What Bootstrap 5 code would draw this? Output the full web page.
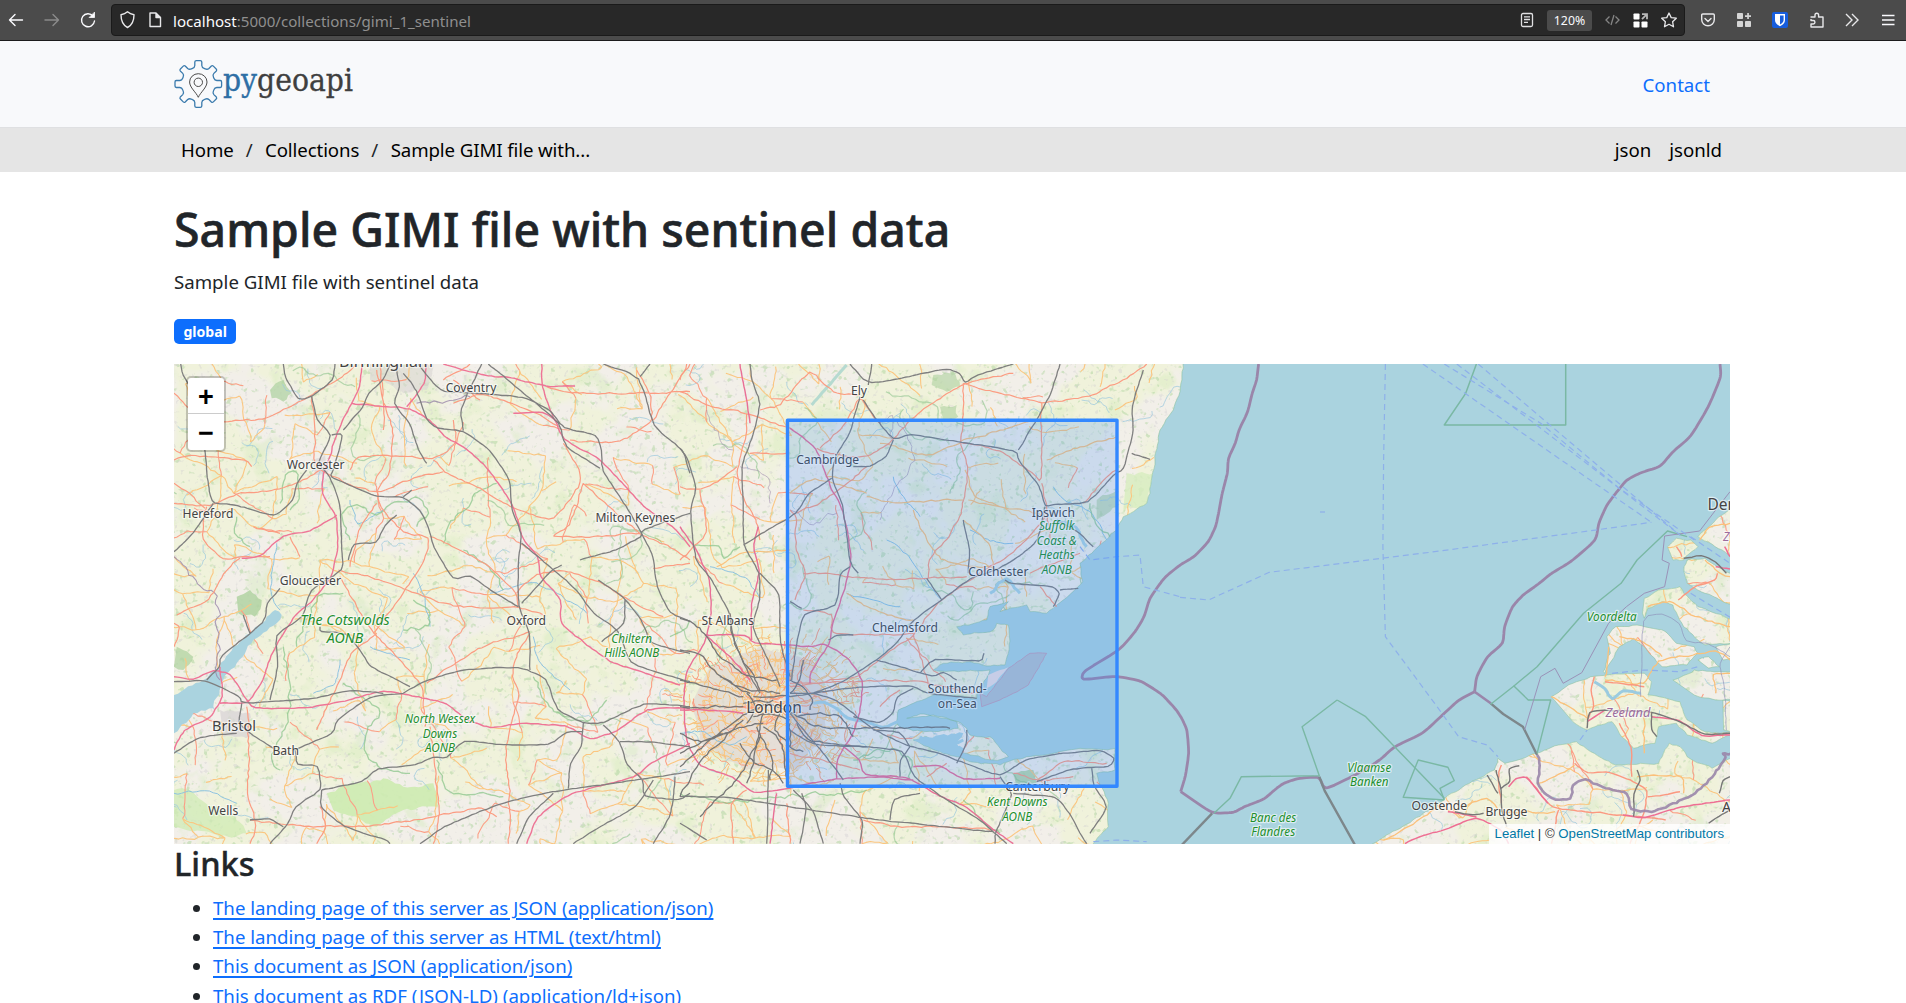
<!DOCTYPE html>
<html lang="en">
<head>
<meta charset="utf-8">
<title>Sample GIMI file with sentinel data</title>
<link href="https://cdn.jsdelivr.net/npm/bootstrap@5.3.0/dist/css/bootstrap.min.css" rel="stylesheet">
<style>
html{font-size:19.2px}
body{font-family:"Noto Sans","Open Sans",sans-serif;font-size:18.65px;line-height:29px;overflow:hidden;height:1003px;color:#212529;background:#fff}
.chrome{height:41px;background:#4b4b4b;border-bottom:1px solid #1c1c1c;padding:0 0 0 7px}
.chrome svg{display:block;flex:none}
.urlbar{height:32px;background:#282828;border:1px solid #1a1a1a;border-radius:4px;width:1574px;flex:none;margin-left:14px;padding:0 7px 0 8px}
.url-txt{font-size:15.1px;color:#8f8f8f;margin-left:9px;line-height:20px;padding-top:1px}
.url-txt b{font-weight:400;color:#fbfbfe}
.urltools{gap:13px}
.exttools{gap:21.600px;margin-left:16px}
.zoomlvl{width:45px;height:21px;border-radius:3px;background:#4b4b4b;color:#fbfbfe;font-size:12.3px;line-height:21px;text-align:center}
.wrapx{width:1556px;margin-left:174px}
.site-head{height:87px;background:#f8f9fb;border-bottom:1px solid #dfe0e2}
.contact-link{margin-right:20px}
.site-sub{height:44px;background:#e5e5e5}
.site-sub a{color:#000;text-decoration:none}
.crumbs{margin-left:7px;margin-top:-1px;letter-spacing:-.1px}
.crumbs span{color:#212529;margin:0 12.500px 0 12px}
.formats{gap:18px;margin-right:8px;margin-top:-1px}
.h-title{font-size:46.4px;line-height:58px;font-weight:500;margin:28px 0 9px;white-space:nowrap;-webkit-text-stroke:.6px #212529;letter-spacing:.04px}
.gbadge{font-size:14.1px;line-height:15px;padding:5px 9.400px;border-radius:5px;height:25px;display:block;width:62px;text-align:center;margin-top:23px;margin-bottom:20px;white-space:nowrap}
.mapbox{height:480px;position:relative;background:#aad3df;overflow:hidden;width:1556px}
.zctl{left:12px;top:12px;border:2px solid rgba(0,0,0,.2);border-radius:5px;background:#fff;background-clip:padding-box;width:40px;height:76px}
.zctl span{height:36px;width:36px;font:bold 27px/38px "Liberation Sans",sans-serif;color:#000;text-align:center;display:block}
.zctl span:first-child{border-bottom:1px solid #ccc}
.attrib{right:0;bottom:0;background:rgba(255,255,255,.8);font:13.2px/20px "Liberation Sans",Arial,sans-serif;padding:0 6px;color:#333;white-space:nowrap}
.attrib a{color:#0078a8;text-decoration:none}
.h-links{font-size:32.500px;line-height:38px;font-weight:500;margin:1px 0 10px;-webkit-text-stroke:.4px #212529}
.linklist{padding-left:39px;margin:0}
.linklist li{height:29.200px}
.linklist a{text-decoration:underline;text-decoration-thickness:2px;text-underline-offset:3px;color:#0d6efd}
.mapbox text{font-family:"Noto Sans",sans-serif}
</style>
<script src="https://cdn.jsdelivr.net/npm/bootstrap@5.3.0/dist/js/bootstrap.bundle.min.js"></script>
</head>
<body>
<div class="chrome d-flex align-items-center">
  <svg width="90" height="24" viewBox="0 0 90 24" fill="none" stroke="#fbfbfe" stroke-width="1.4" stroke-linecap="round" stroke-linejoin="round"><path d="M15.500 12H2.500M8 6.500 2.500 12 8 17.500"/><path d="M38 12H51.500M46 6.500 51.500 12 46 17.500" stroke="#8b8b8b"/><path d="M86 8A6.500 6.500 0 1 0 87.500 13"/><path d="M87.500 4.500V9.500H82.500Z" fill="#fbfbfe" stroke-width=".8"/></svg>
  <div class="urlbar d-flex align-items-center">
    <svg width="44" height="22" viewBox="0 0 44 22" fill="none" stroke="#e8e8ea" stroke-width="1.400" stroke-linejoin="round"><path d="M7.500 2.800C9.500 4.500 11.500 5.300 14 5.800 14 11.500 12.500 16 7.500 18.500 2.500 16 1 11.500 1 5.800 3.500 5.300 5.500 4.500 7.500 2.800Z"/><path d="M30 4h6l4.500 4.500V17.500H30Z"/><path d="M36 4v4.500h4.500" fill="#e8e8ea"/></svg>
    <div class="url-txt"><b>localhost</b>:5000/collections/gimi_1_sentinel</div>
    <div class="urltools d-flex align-items-center ms-auto">
      <svg width="14" height="16" viewBox="0 0 14 16" fill="none" stroke="#e0e0e2" stroke-width="1.300"><rect x="1.500" y="1.500" width="11" height="13" rx="1.500"/><path d="M4 4.800h6M4 7.500h6M4 10.300h4"/></svg>
      <div class="zoomlvl">120%</div>
      <svg width="15" height="12" viewBox="0 0 15 12" fill="none" stroke="#858585" stroke-width="1.300"><path d="M4.500 2.500 1 6l3.500 3.500M10.500 2.500 14 6l-3.500 3.500M9 1 6 11"/></svg>
      <svg width="15" height="15" viewBox="0 0 15 15" fill="#fff"><rect x=".5" y=".5" width="6" height="6" rx=".8"/><rect x=".5" y="8.500" width="6" height="6" rx=".8"/><rect x="8.500" y="8.500" width="6" height="6" rx=".8"/><path d="M9 1.200h5v5M14 1.200 9 6.200" fill="none" stroke="#b8b8b8" stroke-width="1.800"/></svg>
      <svg width="16" height="16" viewBox="0 0 16 16" fill="none" stroke="#e8e8ea" stroke-width="1.300" stroke-linejoin="round"><path d="M8 1 10.200 5.600 15.300 6.200 11.600 9.700 12.500 14.800 8 12.300 3.500 14.800 4.400 9.700.7 6.200 5.800 5.600Z"/></svg>
    </div>
  </div>
  <div class="exttools d-flex align-items-center">
    <svg width="14" height="14" viewBox="0 0 14 14" fill="none" stroke="#e8e8ea" stroke-width="1.400" stroke-linecap="round" stroke-linejoin="round"><path d="M1.800 1H12.200Q13.300 1 13.300 2V6.500A6.300 6.300 0 0 1 .7 6.500V2Q.7 1 1.800 1ZM4 5.500 7 8.400 10 5.500"/></svg>
    <svg width="14" height="14" viewBox="0 0 14 14" fill="#d5d5d5"><rect width="6" height="6" rx=".8"/><rect y="8" width="6" height="6" rx=".8"/><rect x="8" y="8" width="6" height="6" rx=".8"/><path d="M10.200 0h1.700v2.200h2.100v1.700h-2.100V6h-1.700V3.900H8V2.200h2.200Z"/></svg>
    <svg width="16" height="16" viewBox="0 0 16 16"><rect width="16" height="16" rx="2" fill="#175ddc"/><path d="M3 2h10v6c0 3.500-3 5.200-5 6.300C6 13.200 3 11.500 3 8Z" fill="#fff"/><path d="M8 3.500h3.600V8c0 2.200-2 3.600-3.600 4.500Z" fill="#175ddc"/></svg>
    <svg width="14" height="16" viewBox="0 0 14 16" fill="none" stroke="#e8e8ea" stroke-width="1.400" stroke-linejoin="round"><path d="M1 5.500V5H5V3a1.800 1.800 0 0 1 3.600 0V5H13V15H1V12H3.200a1.700 1.700 0 0 0 0-3.500H1V7"/></svg>
    <svg width="14" height="14" viewBox="0 0 14 14" fill="none" stroke="#e8e8ea" stroke-width="1.400"><path d="M1 1 7 7 1 13M7 1 13 7 7 13"/></svg>
    <svg width="14" height="12" viewBox="0 0 14 12" stroke="#fbfbfe" stroke-width="1.300"><path d="M1 1.500h12.500M1 6h12.500M1 10.500h12.500"/></svg>
  </div>
</div>
<header class="site-head d-flex align-items-center"><div class="wrapx d-flex align-items-center justify-content-between">
  <svg id="logo" width="182" height="52" viewBox="0 0 182 52"><g transform="translate(24.300 26)"><path id="gear" fill="none" stroke="#3b7bad" stroke-width="1.300" stroke-linejoin="round"/><path d="M0 13.300C-2 8.500-8.700 3.500-8.700-2A8.700 8.300 0 0 1 8.700-2C8.700 3.500 2 8.500 0 13.300Z" fill="none" stroke="#4a4a4a"/><circle cy="-1.700" r="4.200" fill="none" stroke="#4a4a4a"/></g><text x="49" y="32.700" font-family="DejaVu Serif" font-size="32" textLength="130" lengthAdjust="spacingAndGlyphs" fill="#3f3f3f" stroke="#3f3f3f" stroke-width=".35"><tspan fill="#2e6fa5" stroke="#2e6fa5">py</tspan>geoapi</text></svg>
  <a class="text-decoration-none contact-link" href="#">Contact</a>
</div></header>
<nav class="site-sub d-flex align-items-center"><div class="wrapx d-flex justify-content-between"><div class="crumbs d-flex"><a href="#">Home</a><span>/</span><a href="#">Collections</a><span>/</span><a href="#">Sample GIMI file with...</a></div><div class="formats d-flex"><a href="#">json</a><a href="#">jsonld</a></div></div></nav>
<main class="wrapx">
  <h1 class="h-title">Sample GIMI file with sentinel data</h1>
  <p class="mb-0">Sample GIMI file with sentinel data</p>
  <span class="gbadge text-bg-primary fw-bold">global</span>
  <div class="mapbox">
    <svg id="map" width="1556" height="480" viewBox="0 0 1556 480"></svg>
    <div class="zctl position-absolute"><span>+</span><span>−</span></div>
    <div class="attrib position-absolute"><a href="#">Leaflet</a> | © <a href="#">OpenStreetMap contributors</a></div>
  </div>
  <h2 class="h-links">Links</h2>
  <ul class="linklist">
    <li><a href="#">The landing page of this server as JSON (application/json)</a></li>
    <li><a href="#">The landing page of this server as HTML (text/html)</a></li>
    <li><a href="#">This document as JSON (application/json)</a></li>
    <li><a href="#">This document as RDF (JSON-LD) (application/ld+json)</a></li>
  </ul>
</main>
<script>
// Logo gear: eight teeth joined by scalloped valleys
(function(){
  var d='';
  for(var k=0;k<8;k++){
    var a=k*Math.PI/4,R=function(x,y){return (x*Math.cos(a)-y*Math.sin(a)).toFixed(2)+' '+(x*Math.sin(a)+y*Math.cos(a)).toFixed(2)+' ';};
    d+=(k?'L':'M')+R(-5.8,-15.6)+'Q'+R(-3.6,-16.4)+R(-3.5,-18.500)+'L'+R(-3.5,-22)+'Q'+R(-3.4,-23.3)+R(-2,-23.300)+'L'+R(2,-23.3)+'Q'+R(3.4,-23.3)+R(3.5,-22)+'L'+R(3.5,-18.5)+'Q'+R(3.6,-16.4)+R(5.8,-15.600);
  }
  document.getElementById('gear').setAttribute('d',d+'Z');
})();

// Map sheets: each sheet's points are converted to map pixels
var seed=7;function rnd(){seed=(seed*16807)%2147483647;return seed/2147483647;}
var SH={A:[-4,1/3],B:[506,1/3],C:[1006,1/2.8]};
function P(s,str){return str.trim().split(/\s+/).map(function(q){var v=q.split(',');return [SH[s][0]+v[0]*SH[s][1],v[1]/3-4];});}
function dd(p,close){return 'M'+p.map(function(q){return q[0].toFixed(1)+' '+q[1].toFixed(1);}).join('L')+(close?'Z':'');}
function soft(p){
  if(p.length<3)return p;
  var o=[p[0]];
  for(var i=1;i<p.length-1;i++){var a=p[i-1],b=p[i],c=p[i+1];
    o.push([b[0]*.72+a[0]*.28,b[1]*.72+a[1]*.28],[b[0]*.88+(a[0]+c[0])*.06,b[1]*.88+(a[1]+c[1])*.06],[b[0]*.72+c[0]*.28,b[1]*.72+c[1]*.28]);}
  o.push(p[p.length-1]);return o;
}
function wig(p,amp,step){
  var o=[p[0]];
  for(var i=1;i<p.length;i++){
    var a=p[i-1],b=p[i],dx=b[0]-a[0],dy=b[1]-a[1],L=Math.hypot(dx,dy)||1,n=Math.max(1,Math.round(L/step)),w=0;
    for(var j=1;j<n;j++){w=w*.6+(rnd()-.5)*amp;var t=j/n;o.push([a[0]+dx*t-dy/L*w,a[1]+dy*t+dx/L*w]);}
    o.push(b);
  }
  return o;
}
var out='';
function pa(d,st,w,x){out+='<path d="'+d+'" fill="none" stroke="'+st+'" stroke-width="'+w+'" stroke-linejoin="round" '+(x||'')+'/>';}
function lines(s,data,col,w,amp,x){var d='';data.split(';').forEach(function(l){if(l.trim())d+=dd(wig(soft(P(s,l)),amp,4));});pa(d,col,w,x);}

var coast=wig(P('B','1509,12 1500,95 1480,150 1440,210 1425,300 1410,400 1400,430 1330,470 1310,510 1260,555 1200,610 1208,665 1150,720 1100,760 1050,755 1040,735 960,755 985,725 930,740 920,780 830,800 850,825 940,810 950,790 985,795 985,880 975,915 920,918 870,905 790,910 760,930 835,935 930,930 900,985 890,1015 760,1005 700,1030 655,1050 650,1085 660,1102 700,1112 800,1110 835,1105 830,1085 760,1065 680,1075 720,1062 835,1085 860,1105 870,1125 930,1130 985,1190 940,1200 860,1180 790,1165 740,1130 700,1140 790,1180 870,1205 960,1215 1040,1190 1200,1165 1305,1165 1305,1230 1250,1240 1285,1330 1285,1400 1240,1451'),1.6,4);
var gb=[[-3,-3],[1009,-3]].concat(coast,[[915,484],[-3,484]]);
var isl=[
 '540,1451 700,1350 760,1300 880,1230 890,1195 910,1210 1000,1180 1060,1155 1110,1145 1150,1175 1220,1215 1290,1210 1340,1210 1370,1150 1400,1160 1420,1190 1490,1225 1530,1200 1555,1190 1555,1465 520,1465',
 '1040,1010 1100,970 1150,950 1300,940 1320,965 1310,1005 1400,1025 1420,1080 1470,1115 1555,1120 1490,1150 1420,1125 1390,1090 1340,1100 1330,1150 1270,1165 1230,1120 1210,1085 1140,1110 1100,1085',
 '1195,830 1220,800 1280,795 1360,815 1390,850 1440,860 1450,880 1420,915 1350,920 1300,860 1270,835 1230,860 1210,900 1190,940 1185,935 1205,880',
 '1300,715 1340,690 1400,680 1410,700 1450,740 1555,780 1555,850 1470,855 1410,800 1380,735 1350,725 1310,745 1300,775 1295,760',
 '1410,630 1420,600 1470,595 1555,650 1555,740 1470,700 1420,670','1365,560 1390,535 1430,540 1450,560 1410,600 1380,600',
 '1555,440 1500,480 1450,530 1555,595','1380,960 1440,930 1555,940 1555,1020 1500,1020 1440,1005','1450,900 1480,890 1510,920 1480,925','1500,860 1555,850 1555,890 1520,900','1520,1020 1555,1030 1555,1120 1522,1110'].map(function(s){return wig(P('C',s),1.500,4);});
var land=dd(gb,1)+isl.map(function(p){return dd(p,1);}).join('');
function blot(id,f,oct,sd,col,k,t){return '<filter id="'+id+'" x="0" y="0" width="100%" height="100%" color-interpolation-filters="sRGB"><feTurbulence type="fractalNoise" baseFrequency="'+f+'" numOctaves="'+oct+'" seed="'+sd+'"/><feColorMatrix values="0 0 0 0 '+col+' '+k+' 0 0 0 '+(-t)+'"/></filter>';}
out+='<defs><clipPath id="lc"><path d="'+land+'"/></clipPath>'
 +blot('f1','.012',4,3,'.94 0 0 0 0 .95 0 0 0 0 .86',10,4.3)
 +blot('f2','.17',2,8,'.68 0 0 0 0 .83 0 0 0 0 .62',8,5.1)
 +blot('f3','.03',4,21,'.82 0 0 0 0 .92 0 0 0 0 .72',7,4.3)
 +blot('f4','.2',2,5,'.82 0 0 0 0 .81 0 0 0 0 .82',9,5.9)+'</defs>';
out+='<rect width="1556" height="480" fill="#aad3df"/><g clip-path="url(#lc)"><rect width="1556" height="480" fill="#f2efe9"/>';
out+='<rect width="1556" height="480" filter="url(#f1)"/><rect width="1556" height="480" filter="url(#f3)" opacity=".38"/><rect width="1556" height="480" filter="url(#f2)" opacity=".5"/><rect width="1556" height="480" filter="url(#f4)" opacity=".4"/>';
function area(s,str,col,o){out+='<path d="'+dd(wig(P(s,str),3,4),1)+'" fill="'+col+'" opacity="'+(o||1)+'"/>';}
area('A','470,1300 530,1275 600,1270 640,1255 700,1280 790,1270 805,1340 700,1350 620,1400 560,1370 490,1350','#cdebb0',.9);
area('A','12,1290 60,1290 130,1340 200,1380 230,1420 150,1430 12,1400','#cdebb0',.7);
area('A','200,710 240,690 275,720 255,770 205,760','#add19e',.8);
area('A','300,90 340,60 365,100 340,125 305,115','#add19e',.7);area('A','20,860 70,890 40,930 12,920','#add19e',.7);
area('B','760,45 820,35 840,80 800,95 755,75','#add19e',.6);area('B','780,140 830,135 835,170 790,180','#add19e',.6);
area('B','1000,1240 1060,1230 1070,1270 1010,1280','#add19e',.8);area('B','1250,420 1310,390 1310,440 1250,480','#add19e',.6);
area('B','1340,340 1420,340 1400,430 1330,450','#d7ecbf',.8);
area('A','600,12 790,12 770,90 700,100 640,60 600,60','#dad6d6',.6);area('A','430,300 465,285 475,335 435,345','#dad6d6',.7);area('A','150,1050 240,1060 240,1130 160,1130','#dad6d6',.8);
area('B','90,920 250,860 400,900 440,1000 430,1120 350,1230 200,1230 60,1150 40,1020','#e2dad2',.8);
// minor road net
(function(){
  var sp=27,nx=60,ny=20,n=[],o='',s2='',i,j;
  for(j=0;j<ny;j++){n.push([]);for(i=0;i<nx;i++)n[j].push([(i-.5)*sp+(rnd()-.5)*22,(j-.5)*sp+(rnd()-.5)*22]);}
  for(j=0;j<ny-1;j++)for(i=0;i<nx-1;i++){
    [[0,1,.42],[1,0,.42],[1,1,.1]].forEach(function(q){if(rnd()<q[2]*(i*sp>640&&i*sp<1000?.55:1)){var d=dd(wig([n[j][i],n[j+q[0]][i+q[1]]],2.6,4));if(rnd()<.2)s2+=d;else o+=d;}});
  }
  var r='';for(i=0;i<230;i++){var x=rnd()*1556,y=rnd()*480,a=rnd()*6.3,p=[[x,y]];for(j=0;j<10;j++){a+=(rnd()-.5)*1.8;x+=Math.cos(a)*3.600;y+=Math.sin(a)*3.6;p.push([x,y]);}r+=dd(p);}
  pa(r,'#9cc9de',.9,'opacity=".8"');pa(o,'#fbc680',1.1);pa(s2,'#fb9f86',1.1);
  var g='';for(i=0;i<30;i++){var x=rnd()*1000,y=rnd()*480,a=rnd()*6.3,p=[[x,y]];for(j=0;j<18;j++){a+=(rnd()-.5)*1.6;x+=Math.cos(a)*4;y+=Math.sin(a)*4;p.push([x,y]);}g+=dd(p);}
  pa(g,'#8cc38c',1.200,'opacity=".6"');
})();
// London streets
(function(){
  var cx=598,cy=345,i,o='',t='';
  for(i=0;i<420;i++){var a=rnd()*6.283,r=Math.pow(rnd(),.7)*84,x=cx+Math.cos(a)*r*1.1,y=cy+Math.sin(a)*r*.85,b=rnd()<.5?a:a+1.57,l=8+rnd()*12;
    var d=dd(wig([[x,y],[x+Math.cos(b)*l,y+Math.sin(b)*l]],3,3));if(i%5)o+=d;else t+=d;}
  pa(o,'#f9c27a',1);pa(t,'#fb9c7c',1);
})();
out+='</g>';
pa(land,'#86bf9a',1,'opacity=".55"');
area('A','12,1005 100,960 150,920 190,860 240,820 290,770 315,750 335,765 320,790 250,840 200,910 160,960 130,1045 70,1060 12,1120','#aad3df');
lines('B','400,1030 430,1025 470,1045 500,1075 560,1085 610,1105 655,1085','#aad3df',3,1);
lines('B','720,1130 760,1150 800,1165 850,1170;780,1130 830,1150 850,1140;930,700 980,650 1020,700;1220,560 1190,500 1130,480','#aad3df',3,3);
area('B','700,1140 780,1125 850,1120 830,1150 860,1185 790,1178','#aad3df');
lines('B','395,135 500,15','#b5dad0',3,.5);
lines('B','620,540 680,580 720,640 780,715;640,350 660,400 720,470;870,510 930,545 1000,550;500,700 580,720 660,740;1120,380 1150,420 1230,450 1280,540;90,620 200,650 240,720;0,1120 60,1110 150,1160 200,1130','#8fc4e0',1,2.500);
lines('A','730,640 760,700 780,800;540,420 560,500 640,450;12,1300 120,1290 200,1330;320,550 300,700 330,750;960,700 1100,660 1250,760;430,1000 500,970 510,900;600,860 650,880 720,900;1090,830 1100,900 1200,990','#8fc4e0',1,2.500);
// protected-area outlines and county borders
lines('A','540,540 510,460 560,430 620,470 660,430 750,410 780,460 740,500;820,550 840,480 900,440 910,400 980,370;330,430 345,340 380,330 390,420 360,450;340,860 360,960 350,1100 300,1200 330,1230;520,970 640,1060 590,1110 580,1170 620,1220 720,1240;880,570 960,620 1000,690;730,720 780,750 780,800 700,810;1090,950 1150,1060 1250,1090 1310,1020;1500,830 1560,780;800,1200 830,1300 1000,1310;380,860 440,700 520,700;200,470 190,520 240,560','#8cc68c',1.300,4,'opacity=".75"');
lines('A','12,590 70,650 100,690 145,700 140,850 150,960;740,130 830,125 900,110','#9a86aa',1.100,5,'opacity=".8"');
lines('B','80,150 100,210 160,270;180,320 270,350 270,430;640,180 700,260 690,330 620,420 600,480;330,450 400,500 470,460;600,190 640,160 640,240','#9a86aa',.900,5,'opacity=".6"');
lines('B','0,1300 150,1330 300,1310 480,1300 560,1290;520,1200 640,1160 700,1200 690,1260;40,560 120,555 130,600 180,560;1230,430 1250,500 1290,530;850,1320 900,1380 960,1420','#8cc68c',1.300,4,'opacity=".75"');

var trunkA='12,100 60,150 150,185 280,180 380,130 425,105 520,50 560,12;425,110 435,200 430,300 450,330 540,375 620,400 760,345 820,335;450,330 380,370 290,395 200,400 120,440 12,430;12,300 60,285 120,290 230,300 245,320;110,440 95,540 160,600 210,590 300,590;105,445 60,400 12,370;210,595 160,640 120,720 20,765;330,520 250,500;390,590 360,530;505,630 600,650 740,700 850,740 960,745 1045,740 1120,765;510,650 560,740 610,820 700,910 760,980 765,1100;620,820 540,880 510,960 440,1110;610,820 700,700 760,610 780,530 700,520 630,440 620,390 660,340 670,200 640,130 620,30;620,430 570,500 540,620;780,530 870,570 960,620 1040,700 1045,740;1040,700 1100,640 1180,630 1300,670 1370,715 1410,740 1480,770;1080,820 1040,880 1025,950 1050,1000 1020,1100 1005,1200 1020,1300 1015,1451;12,860 30,800 12,790;230,1040 240,1200 230,1300 260,1400 240,1451;440,1451 470,1400 450,1340;780,1100 790,1180 800,1280 810,1360 790,1451;240,1380 400,1400 600,1400 800,1370 930,1340 980,1370;630,12 640,90 640,210;540,330 560,290 650,285 790,300 860,250 850,180;790,300 830,340 920,380 1020,440 1100,470 1150,480 1230,380 1230,330 1180,250;850,130 930,100 1000,120 1100,160 1170,200;1130,80 1200,100 1380,100 1560,95;820,60 900,12;930,120 850,60;1450,180 1500,100 1560,12;1400,30 1440,100 1450,180 1380,230 1320,250 1200,240;1240,370 1330,450 1420,530 1480,550 1560,600;1240,370 1200,500 1140,530 1270,530 1410,520;770,970 870,900 960,850 1040,830 1080,815;1450,625 1560,610';
var trunkB='0,95 90,140 220,165 340,210;240,150 300,140 390,25 460,100 540,105;200,160 200,220 170,330 180,400 230,480 240,540;0,380 60,390 120,360 170,320;60,390 85,520 0,600;410,265 500,290 560,290 630,250 680,190 740,140 850,70 1000,40;320,280 210,280;850,70 850,200 840,245 865,320 855,400 840,470 800,540 745,600 745,655;850,70 960,100 1100,130 1230,110 1330,60 1400,12;840,245 960,270 1060,340 1085,370 1085,130;1085,370 1100,440 1110,540;370,640 450,640 500,650 650,660 740,655 860,650;420,265 490,200 540,110 560,140 600,190;350,460 420,430 490,380 560,320;345,720 380,640 345,560 350,470 330,450;1095,470 1040,540 970,600 930,620 780,720 700,830 620,880 540,950 400,970 330,980;370,750 460,760 450,820 600,825 700,820;700,820 740,950 750,990;330,970 550,965 700,960 880,1000;1050,640 1150,600 1200,580;1080,680 1130,740;1210,430 1280,350 1310,330;600,1040 660,990;330,1180 430,1200 540,1230;1070,1265 1150,1200 1280,1210;800,1210 740,1250;550,1380 650,1400 800,1400 940,1410;160,1451 150,1330 200,1290;320,1330 330,1451;0,60 20,12;1180,1250 1080,1265 1000,1240';
var secB='600,250 740,290 840,250;865,420 960,440 1095,465;560,410 650,430 700,425 850,420;840,245 960,210 1080,180;1100,300 1200,260 1310,230;855,330 880,410 960,440;700,450 740,540 780,600 870,620 930,620;500,700 560,740 610,760 700,780;110,620 190,575 330,570;850,480 930,550 940,620;330,400 400,350 560,400';
lines('B',secB,'#fbc27c',1.2,2);
lines('A',trunkA,'#fb9c82',1.200,1.8);lines('B',trunkB,'#fb9c82',1.200,1.8);
lines('A','575,12 570,80 545,130 500,220 480,290 460,340 455,400 500,470 505,560 485,650 430,720 370,770 300,890 280,960 235,1030 150,1030;12,950 70,960 130,930 180,940 230,1020 250,1045 400,1045 540,1020 640,990 760,1015 830,1030 890,1080 960,1105 1040,1090 1190,1095 1260,1140 1340,1115 1430,1045 1560,1045;545,130 640,140 720,145 780,180 830,235 880,260 940,310 1000,390 1030,440 1060,540 1105,590 1110,650 1175,720 1170,790 1270,870 1330,910 1400,930 1530,975;770,12 765,70 710,140;820,12 960,50 1010,50 1130,80 1215,78;1115,12 1115,70 1140,150 1180,240 1280,290 1340,350 1420,440 1510,500 1560,560;1030,160 1120,155 1170,190;215,595 270,590 340,525 420,515 500,465;12,1170 40,1110 120,1075 160,1010 150,920;1070,1451 1100,1370 1200,1300 1400,1250 1440,1210 1560,1150','#ee7596',1.400,1);
lines('B','180,12 200,120 210,190;0,500 50,570 90,660 95,760 75,850 20,930 10,1010 20,1150 60,1220 160,1250 220,1300 300,1290 470,1255 600,1250 700,1260;75,825 200,825 220,850 330,855 400,860 430,850 500,890 550,960 540,1060 520,1120 470,1200 470,1255;215,840 215,720 240,640 220,560 235,500;330,205 410,265 450,380 490,450 515,600 490,700 455,800 450,850 390,940 390,970;290,1300 270,1451;490,1160 540,1200 550,1245 680,1250 780,1310 860,1340 940,1410 1000,1451;700,1220 780,1215 850,1260 960,1255;0,1050 100,1050 190,1060;75,825 160,900 210,960','#e96f96',1.400,1);
lines('A','32,12 38,45 75,100 105,270 118,400 130,430 200,435 315,470 370,420 380,370 410,330;130,430 70,520 12,575;340,12 345,50 385,120 425,110 490,60 495,12;425,110 440,180 485,225 455,285 445,310 480,350 510,430 515,560 520,630 420,690 400,770 315,825 325,920 300,1020;485,225 520,220 490,330 480,350 560,385 620,410 700,410 750,450 775,500 790,560 850,660 900,645 960,690 1045,740;660,12 640,60 595,100 580,140 520,210;680,30 690,80 670,130 720,190 745,270 770,310;700,40 740,90 770,180 800,205 880,212 960,270 1020,360 1025,450 1055,520 1045,600 1045,740 1080,820 1080,930;745,12 790,70 820,95 920,100 1060,110 1140,150 1180,205 1280,225 1295,270 1295,330 1370,440 1415,520 1450,590 1460,680 1500,760 1560,785;935,12 870,150 880,212;955,12 1080,115 1170,190 1185,260 1290,325;1300,12 1410,50 1450,200 1540,270 1560,340;1410,50 1440,12;1055,550 1140,620 1220,690 1270,760 1345,810 1380,910 1470,940 1560,965;1175,615 1145,630 1055,730;1230,600 1340,570 1415,530 1415,510 1560,460;1285,660 1360,710 1415,780 1440,850 1560,880;1365,720 1365,790 1295,845;12,965 105,960 210,1010 215,1030 420,1018 540,990 640,1000;700,1000 760,965 870,930 1050,920 1130,955 1160,1050 1240,1090 1300,1090 1420,1028 1560,1040;330,685 290,730 285,785 150,890 150,920 110,960;215,1030 205,1090 240,1120 310,1165 ;375,1170 490,1120 500,1080 600,1010 700,1000;12,1180 90,1130 200,1120;375,1170 380,1215 445,1215 455,1290 375,1340 355,1390 300,1451;455,1290 450,1340 520,1400 650,1440 660,1451;455,1290 580,1265 620,1225 740,1215 790,1190 830,1195 880,1140 1000,1155 1140,1155 1190,1115 1240,1115;1240,1090 1235,1160 1200,1210 1195,1285;750,1451 820,1400 940,1350 1030,1320 1150,1295 1400,1260 1560,1235;1040,1451 1075,1370 1150,1300;1300,1095 1350,1145 1370,1215 1420,1260 1420,1310 1530,1320 1560,1300;1210,1451 1290,1400 1400,1340 1450,1260;450,800 450,815 530,820 570,870 600,920 720,980;1350,1145 1440,1145 1560,1160;1450,1451 1500,1370 1510,1320 1515,1250;700,410 725,390;535,600 550,550 620,550 645,495 680,465;240,1380 300,1375 340,1400;220,765 240,820','#7f7f7f',1.300,.7);
lines('B','210,12 215,60 243,130 215,240 185,310 190,450 190,555 240,640 240,720 215,800 265,900 300,980;190,555 280,500 350,460 385,400 455,355;0,265 20,290 50,385 30,450 45,600 90,650 150,760 160,840 210,950 240,1000;240,640 300,700 300,850 330,950;510,12 565,75 800,25 840,40 855,70 890,45 1000,12;565,75 575,12;540,110 510,220 465,290 455,355 490,440 510,610 535,640;550,120 590,180 640,240 690,222 800,240 1010,272 1015,300 1080,380 1095,440 1130,432 1225,430 1305,340 1330,330 1360,220 1355,140 1390,30;1355,280 1410,298;1140,12 1110,110 1015,270;640,240 620,290 570,320 520,320;1095,440 1075,540 1030,580 960,625 870,655 785,720 700,780 650,850 590,900 480,970 400,1000 330,1010;850,480 870,570 865,640;740,655 785,720;510,620 480,640 470,740 370,760 350,850 335,960;330,725 365,745;975,660 990,670 1060,675 1120,680 1140,700 1120,740;1140,690 1195,685;1130,480 1200,520 1240,560;590,900 660,920 760,950 790,935 830,960;720,940 760,895 905,905 912,880;400,1000 500,985 600,978 700,978 740,1000 890,1015;330,1000 400,1000 470,1020 580,1110 690,1160 780,1180 870,1215 960,1250 1040,1195 1260,1168 1305,1195 1290,1220 1180,1225 1070,1265;690,1160 660,1200 660,1250;580,1110 660,1115 690,1160;330,1110 400,1155 560,1160 670,1170 700,1250 800,1320 900,1380 980,1451;330,1060 430,1180 490,1260;960,1250 1000,1300 945,1420 945,1451;0,1310 130,1310 300,1335 550,1375 940,1415;1000,1300 1130,1310 1175,1370 1200,1420 1220,1451;1235,1225 1240,1275 1285,1340 1230,1420;630,1380 640,1315 720,1300;365,1300 380,1340 360,1451;265,1230 260,1451;340,1290 400,1350 430,1451;0,1390 80,1440;480,1270 490,1310 550,1380 540,1451;520,1070 600,1090 640,1060 650,1010 700,985;830,1210 860,1150 860,1110;445,840 470,825 520,825','#7f7f7f',1.300,.7);
// London rail
lines('B','0,870 60,880 120,950 200,990 300,1000;0,960 80,980 190,1010;0,1040 190,1040;0,1220 100,1130 200,1060 280,1020;0,1310 60,1200 190,1080;0,1180 120,1120 250,1090;60,1370 180,1250 240,1130;200,1270 230,1160 250,1060;110,880 200,950 290,960;0,775 60,800 110,880;150,760 160,850 240,990;230,1100 280,1200 270,1260;250,1100 310,1150 320,1280;300,1060 280,1110 340,1170 370,1175;330,960 370,980 400,1020 390,1050;340,1060 400,1100 500,1105 560,1105 750,1100 810,1105;350,1070 410,1060 480,1065 520,1130;370,900 360,960 330,1000;200,1000 230,1040 200,1090;220,1010 330,1010;190,1030 240,1020 290,1040 340,1060;220,1070 270,1060 330,1080;330,1090 330,1160;350,1090 380,1140 480,1155 560,1160;120,950 210,1000;180,1150 220,1210 280,1230 310,1270;0,1120 60,1150 160,1110','#777',1.300,2.200);

// North Sea / Netherlands / Belgium
lines('C','1040,1010 1090,1040 1140,1075;1190,960 1230,965 1300,975 1335,900 1440,885 1500,870 1540,900;1300,1050 1300,1180;1200,860 1190,950;1230,830 1290,840 1350,890;1310,740 1370,720 1440,770 1540,800;1455,540 1480,500 1540,490;1470,600 1510,640 1540,650;1000,1270 1050,1250 1105,1215;800,1340 860,1310 900,1360 1050,1355;570,1440 640,1400 720,1340;1280,1250 1410,1245 1410,1300;1540,940 1490,940 1500,1000','#fbc07a',1.300,2);
lines('C','1105,1210 1140,1240 1200,1235 1270,1265 1310,1290 1300,1360 1260,1451;970,1250 1030,1330 1050,1345 1240,1365 1360,1380;1265,1250 1265,1160 1230,1090;1160,950 1150,990 1160,1040 1140,1080;1190,965 1300,980;1395,720 1440,680 1500,660 1505,640;1390,560 1405,590;900,1215 890,1260 900,1330;1310,1310 1400,1295;1060,1350 1040,1451','#fb9880',1.400,1.200);
lines('C','630,1451 670,1430 740,1410 830,1370 900,1410 920,1451;750,1355 830,1370;920,1280 940,1255 970,1250 1000,1290 1030,1330;1140,1085 1190,1050;1320,1070 1400,1080 1460,1130 1540,1125;1240,1365 1300,1375 1400,1340 1540,1320;1525,560 1540,590;1500,620 1540,627','#ee6f93',1.500,.6);
lines('C','860,1245 890,1300;885,1230 900,1290 900,1350 915,1400;950,1217 920,1225 925,1265 900,1285;770,1355 820,1365 850,1360;1140,1105 1145,1055 1190,1050 1320,1055 1400,1085 1470,1125 1540,1120;1320,1060 1320,1110 1335,1130;1410,595 1460,585 1500,605 1530,640;1280,1230 1290,1260 1270,1300 1270,1370;1510,1300 1520,1260 1540,1250;1480,1390 1540,1350','#777',1.400,.8);
lines('C','1160,965 1190,985 1210,1020 1240,990 1290,1000','#9bcbe0',3,1);
lines('C','1290,1010 1295,770 1350,760 1400,790 1415,845 1480,850 1540,890;1540,860 1510,910 1525,980 1530,1110','#8b8bb5',1,1,'opacity=".6"');
var pu='#9a86aa';
function sm(s,str,col,w,x){pa(dd(P(s,str)),col,w,x);}
function smc(s,str,col,w){pa(dd(soft(soft(P(s,str)))),col,w);}
smc('C','220,12 215,60 202,100 190,155 165,210 155,250 135,295 133,340 118,400 108,460 100,500 80,545 40,590 0,615 -35,645 -50,662 -85,715 -100,770 -125,815 -170,870 -271,935 -276,960 -180,948 -110,962 -50,1003 -10,1050 5,1075 20,1110 25,1180 15,1250 2,1295',pu,2.800);
smc('C','2,1295 90,1360 150,1358 180,1340 235,1318 270,1285 290,1270 330,1255 390,1250 405,1290 500,1240 560,1200 600,1160 680,1120 730,1070 780,1020 825,995',pu,2.800);
smc('C','825,995 830,950 860,890 905,850 908,800 930,740 960,705 1000,675 1040,640 1095,605 1165,540 1172,490 1195,435 1220,400 1250,360 1290,338 1345,320 1380,275 1430,230 1480,140 1515,50 1512,12',pu,2.800);
sm('C','825,995 870,1030',pu,2.600);sm('C','870,1030 905,1062 960,1100 1000,1185','#7d878b',2.400);sm('C','390,1250 405,1292 490,1455','#7d878b',2.400);sm('C','90,1360 5,1455','#7d878b',2.400);
lines('C','1000,1185 1008,1215 1000,1270 1020,1300 1050,1320 1095,1318 1098,1275 1135,1255 1180,1280 1255,1300 1260,1350 1330,1355 1400,1320 1430,1310 1500,1240 1530,1190 1518,1180 1545,1180',pu,2.600,2.500,'opacity=".9"');
var gr='#7ab8a4';
sm('C','830,12 800,100 740,195 1080,195 1080,12',gr,1.500);
['440,1020 342,1100 390,1247 172,1250 140,1315 95,1360','440,1020 520,1070 740,1315','740,1320 625,1312 667,1200 750,1222 768,1262 728,1285 740,1320','870,1033 935,978 975,1020 1038,1020 1000,1180','935,978 1000,920 1130,760 1235,670 1280,600 1365,513 1420,530'].forEach(function(s){sm('C',s,gr,1.4);});
sm('C','965,1110 1010,950 1050,925 1073,970 1125,938 1200,790 1250,740 1300,700 1357,680 1370,610 1350,600 1357,528 1455,513 1500,450 1540,395','#9a92b8',1);
var fx='stroke-dasharray="6 4"',fc='#8eb0ea';
['575,12 570,300 568,560 575,830 720,1040 780,1130 860,1155 890,1190','0,712 80,720 250,637 700,577 1150,512 1320,487','680,12 1000,250 1320,487','740,12 1010,190 1230,385 1440,540','775,12 1400,525','835,12 1030,190 1240,380 1400,525','1210,940 1300,930 1400,935 1450,920','1430,700 1545,775','1430,530 1540,610','1120,1140 1140,1110','392,456 406,456'].forEach(function(s){sm('C',s,fc,1.200,fx);});
sm('B','1200,560 1230,600 1310,590 1380,585 1390,680 1500,710',fc,1.200,fx);sm('B','1240,1445 1310,1440 1400,1445',fc,1.200,fx);
out+='<path d="'+dd(wig(P('B','905,1040 900,1000 920,1010 985,925 1050,880 1100,880 1045,975 1000,1000 960,1020'),1,4),1)+'" fill="#b9b0c0" fill-opacity=".5" stroke="#c39ab5" stroke-width=".8"/>';
out+='<path d="'+dd(wig(P('B','925,945 985,922 950,965 920,985'),1,4),1)+'" fill="#ecdfe2"/>';

function tx(s,x,y,t,sz,c,it,anc){out+='<text x="'+(SH[s][0]+x*SH[s][1]).toFixed(1)+'" y="'+(y/3-4).toFixed(1)+'" font-size="'+sz+'" fill="'+c+'" text-anchor="'+(anc||'middle')+'" stroke="#fff" stroke-opacity=".6" stroke-width="2.400" stroke-linejoin="round" paint-order="stroke"'+(it?' font-style="italic"':'')+'>'+t+'</text>';}
var K='#444',G='#1f8f2f';
[['A',648,20,'Birmingham',16],['A',903,95,'Coventry'],['A',437,326,'Worcester'],['A',114,473,'Hereford'],['A',421,674,'Gloucester'],['A',1069,795,'Oxford'],['A',1396,487,'Milton Keynes'],['A',192,1113,'Bristol',14.500],['A',347,1185,'Bath'],['A',160,1365,'Wells'],['B',537,105,'Ely'],['B',443,312,'Cambridge'],['B',1120,470,'Ipswich'],['B',955,649,'Colchester'],['B',675,815,'Chelmsford'],['B',143,795,'St Albans'],['B',282,1058,'London',15.500],['B',832,999,'Southend-'],['B',832,1043,'on-Sea'],['B',1072,1293,'Canterbury'],['C',726,1350,'Oostende'],['C',914,1367,'Brugge']].forEach(function(l){tx(l[0],l[1],l[2],l[3],l[4]||12.100,K);});
tx('C',1477,450,'Den',15.500,K,0,'start');tx('C',1518,1355,'A',14,K,0,'start');tx('C',1520,544,'Z',12,'#9d6c9d',1,'start');tx('C',1254,1070,'Zeeland',12.800,'#9d6c9d',1);
[['A',525,795,'The Cotswolds',14.200],['A',525,848,'AONB',14.200],['A',1385,848,'Chiltern'],['A',1385,892,'Hills AONB'],['A',810,1090,'North Wessex'],['A',810,1133,'Downs'],['A',810,1176,'AONB'],['B',1130,511,'Suffolk'],['B',1130,555,'Coast &amp;'],['B',1130,598,'Heaths'],['B',1130,641,'AONB'],['B',1012,1338,'Kent Downs'],['B',1012,1382,'AONB'],['C',1209,782,'Voordelta'],['C',530,1237,'Vlaamse'],['C',530,1279,'Banken'],['C',261,1386,'Banc des'],['C',261,1428,'Flandres']].forEach(function(l){tx(l[0],l[1],l[2],l[3],l[4]||11.700,G,1);});
out+='<rect x="613.500" y="56.300" width="329.500" height="366" fill="#3388ff" fill-opacity=".2" stroke="#3388ff" stroke-width="3.400" stroke-linejoin="round"/>';
document.getElementById('map').innerHTML=out;
</script>
</body>
</html>
